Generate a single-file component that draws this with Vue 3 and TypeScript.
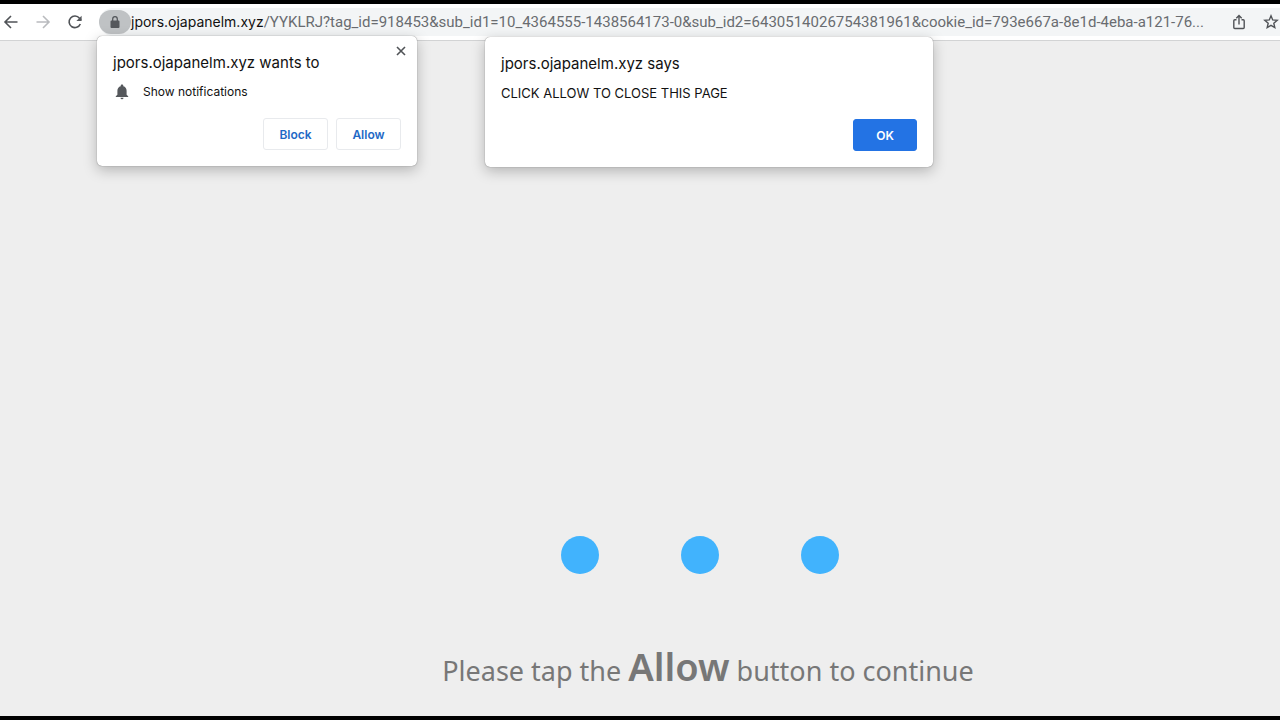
<script setup lang="ts">
import { ref } from 'vue'

const host = 'jpors.ojapanelm.xyz'
const path = ref('/YYKLRJ?tag_id=918453&sub_id1=10_4364555-1438564173-0&sub_id2=6430514026754381961&cookie_id=793e667a-8e1d-4eba-a121-76...')
const dots: number[] = [1, 2, 3]
</script>

<template>
  <div class="browser">
    <header class="toolbar">
      <nav class="nav">
        <button class="icon-btn" aria-label="Back">
          <svg viewBox="0 0 16 16" width="16" height="16"><path d="M14.500 8H2M8 2L2 8l6 6" /></svg>
        </button>
        <button class="icon-btn faded" aria-label="Forward" disabled>
          <svg viewBox="0 0 16 16" width="16" height="16"><path d="M1.500 8H14M8 2l6 6-6 6" /></svg>
        </button>
        <button class="icon-btn" aria-label="Reload">
          <svg viewBox="0 0 16 16" width="16" height="16"><path d="M13.3 10A5.8 5.8 0 1 1 12.5 4.3L14 6" /><path class="solid" d="M14.6 1.800v5.200H9.400z" /></svg>
        </button>
      </nav>
      <div class="omnibox">
        <button class="lock" aria-label="View site information">
          <svg viewBox="0 0 10 12" width="10" height="12"><path class="solid" d="M1.5 4.5h7a1 1 0 0 1 1 1V11a1 1 0 0 1-1 1h-7a1 1 0 0 1-1-1V5.500a1 1 0 0 1 1-1z" /><path class="shackle" d="M2.700 5V3a2.300 2.300 0 0 1 4.600 0v2" /></svg>
        </button>
        <label class="host" for="address">{{ host }}</label>
        <input id="address" v-model="path" class="path" type="text" spellcheck="false" />
        <button class="icon-btn action" aria-label="Share">
          <svg viewBox="0 0 16 16" width="16" height="16"><path class="thin" d="M5.500 5.700H3.800a1 1 0 0 0-1 1v6.800a1 1 0 0 0 1 1h8.400a1 1 0 0 0 1-1V6.700a1 1 0 0 0-1-1h-1.700M8 10.500V1.800M5.300 4.300L8 1.600l2.700 2.700" /></svg>
        </button>
        <button class="icon-btn action" aria-label="Bookmark this page">
          <svg viewBox="0 0 16 16" width="16" height="16"><path class="thin" d="M8 1.800l1.700 4.100 4.500.4-3.400 2.900 1 4.400L8 11.300l-3.800 2.300 1-4.400-3.400-2.900 4.500-.4z" /></svg>
        </button>
      </div>
    </header>

    <main class="page">
      <div class="dots" role="status" aria-label="Loading">
        <span v-for="dot in dots" :key="dot" class="dot"></span>
      </div>
      <p class="message">Please tap the <strong>Allow</strong> button to continue</p>
    </main>

    <section class="popup permission" role="dialog" aria-labelledby="permission-title">
      <button class="close" aria-label="Close">
        <svg viewBox="0 0 10 10" width="10" height="10"><path d="M1 1l8 8M9 1L1 9" /></svg>
      </button>
      <h2 id="permission-title">{{ host }} wants to</h2>
      <p class="request">
        <svg viewBox="0 0 14 16" width="14" height="16"><path class="solid" d="M7 .5c-.8 0-1.300.5-1.300 1.200v.5C3.500 2.700 2.400 4.500 2.400 6.800v4L.8 12.200v.8h12.400v-.8l-1.600-1.400v-4c0-2.300-1.100-4.100-3.300-4.600v-.5C8.300 1 7.800.5 7 .5zM5.500 13.700a1.500 1.500 0 0 0 3 0z" /></svg>
        Show notifications
      </p>
      <div class="buttons">
        <button class="btn">Block</button>
        <button class="btn">Allow</button>
      </div>
    </section>

    <section class="popup alert" role="alertdialog" aria-labelledby="alert-title">
      <h2 id="alert-title">{{ host }} says</h2>
      <p class="text">CLICK ALLOW TO CLOSE THIS PAGE</p>
      <div class="buttons">
        <button class="btn primary">OK</button>
      </div>
    </section>
  </div>
</template>

<style>
body {
  margin: 0;
}
</style>

<style scoped>
.browser {
  box-sizing: border-box;
  position: relative;
  display: flex;
  flex-direction: column;
  min-height: 100vh;
  overflow: hidden;
  border-top: 4px solid #000;
  border-bottom: 4px solid #000;
  background: #eee;
  color: #111;
  font-family: Inter, "Liberation Sans", sans-serif;
}
button {
  padding: 0;
  border: 0;
  background: none;
  font: inherit;
}
svg {
  display: block;
  flex: none;
  fill: none;
  stroke: #505357;
  stroke-width: 1.600;
}
.solid {
  fill: #55585c;
  stroke: none;
}
.thin {
  stroke-width: 1.400;
}
.toolbar {
  display: flex;
  align-items: center;
  height: 36px;
  border-bottom: 1px solid #d2d3d4;
  background: #fff;
}
.nav {
  display: flex;
  gap: 16px;
  padding: 0 16px 0 3px;
}
.faded svg {
  stroke: #b9bbbe;
}
.omnibox {
  display: flex;
  flex: 1;
  min-width: 0;
  align-items: center;
  height: 28px;
  border-radius: 14px 0 0 14px;
  background: #f3f5f6;
  font-size: 14px;
}
.lock {
  display: flex;
  flex: none;
  align-items: center;
  justify-content: center;
  width: 32px;
  height: 24px;
  border-radius: 12px;
  background: #bfc2c4;
}
.shackle {
  stroke-width: 1.200;
}
.host {
  flex: none;
  padding-bottom: 2px;
}
.path {
  flex: 1;
  min-width: 0;
  padding: 0;
  border: 0;
  outline: 0;
  background: none;
  color: #696c70;
  font: 15px Roboto, sans-serif;
  text-overflow: ellipsis;
}
.action {
  margin-left: 16px;
}
.path + .action {
  margin-left: 12px;
}
.action:last-child {
  margin-right: 1px;
}
.page {
  display: flex;
  flex: 1;
  flex-direction: column;
  align-items: center;
  justify-content: flex-end;
  padding: 0 0 19px 120px;
}
.dots {
  display: flex;
  gap: 82px;
  margin-bottom: 66px;
}
.dot {
  width: 38px;
  height: 38px;
  border-radius: 50%;
  background: #41b3fd;
}
.message {
  margin: 0 0 0 16px;
  color: #777;
  font: 27px/52px "Noto Sans", sans-serif;
}
.message strong {
  font-size: 38px;
  font-weight: 600;
}
.popup {
  position: absolute;
  box-sizing: border-box;
  padding: 17px 16px 16px;
  border-radius: 5px;
  background: #fff;
  box-shadow: 0 0 1px rgba(0, 0, 0, 0.6), 0 4px 14px rgba(0, 0, 0, 0.25);
}
.permission {
  top: 32px;
  left: 97px;
  width: 320px;
}
.alert {
  top: 33px;
  left: 485px;
  width: 448px;
}
h2 {
  margin: 0;
  font-size: 15px;
  font-weight: 400;
  line-height: 20px;
}
.request,
.text {
  display: flex;
  align-items: center;
  gap: 14px;
  margin: 7px 0 14px;
  font-size: 12px;
  line-height: 24px;
}
.request {
  padding-left: 2px;
}
.text {
  font-size: 13px;
}
.buttons {
  display: flex;
  justify-content: flex-end;
  gap: 8px;
}
.btn {
  box-sizing: border-box;
  min-width: 65px;
  height: 32px;
  border: 1px solid #e8eaed;
  border-radius: 3px;
  color: #1f69c6;
  font-size: 12px;
  font-weight: 600;
}
.primary {
  min-width: 64px;
  border-color: #2373e4;
  background: #2373e4;
  color: #fff;
}
.close {
  position: absolute;
  top: 10px;
  right: 11px;
}
</style>
